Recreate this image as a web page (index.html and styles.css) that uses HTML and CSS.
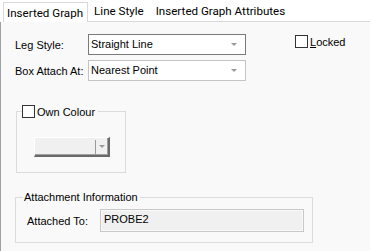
FILE: index.html
```html
<!DOCTYPE html>
<html>
<head>
<meta charset="utf-8">
<link rel="stylesheet" href="styles.css">
</head>
<body>
<div class="window">
  <div class="tabs">
    <div class="tab active">Inserted Graph</div>
    <div class="tab">Line Style</div>
    <div class="tab">Inserted Graph Attributes</div>
    <div class="tab-fill"></div>
  </div>
  <div class="panel">
    <div class="row row-first">
      <span class="label">Leg Style:</span>
      <div class="combo focused"><span class="combo-text">Straight Line</span><span class="arrow"></span></div>
      <label class="check locked"><span class="box"></span><span><u>L</u>ocked</span></label>
    </div>
    <div class="row">
      <span class="label">Box Attach At:</span>
      <div class="combo"><span class="combo-text">Nearest Point</span><span class="arrow"></span></div>
    </div>
    <div class="group colour-group">
      <div class="group-title"><span class="box"></span><span>Own Colour</span></div>
      <div class="colour-combo"><span class="cc-body"></span><span class="cc-sep"></span><span class="arrow small"></span></div>
    </div>
    <div class="group attach-group">
      <div class="group-title text-title">Attachment Information</div>
      <div class="attach-row">
        <span class="label attach-label">Attached To:</span>
        <div class="readonly">PROBE2</div>
      </div>
    </div>
  </div>
</div>
</body>
</html>
```

FILE: styles.css
```css
html, body {
  margin: 0;
  padding: 0;
  background: #ffffff;
}
.window {
  width: 370px;
  height: 251px;
  overflow: hidden;
  font-family: "Liberation Sans", Arial, sans-serif;
  font-size: 11px;
  color: #000;
  display: flex;
  flex-direction: column;
}
.tabs {
  display: flex;
  height: 22px;
  flex: none;
  align-items: flex-end;
  font-family: Roboto, "Noto Sans", sans-serif;
  font-size: 11.6px;
}
.tab {
  height: 21px;
  box-sizing: border-box;
  padding: 0 6px;
  line-height: 21px;
  border-bottom: 1px solid #d9d9d9;
  background: #fff;
  white-space: nowrap;
}
.tab.active {
  margin-left: 3px;
  height: 20px;
  border: 1px solid #d9d9d9;
  border-bottom: none;
  padding: 0 4px 0 3px;
  line-height: 20px;
}
.tab-fill {
  flex: 1;
  height: 1px;
  border-bottom: 1px solid #d9d9d9;
}
.panel {
  flex: 1;
  background: #f9f9f9;
  border-left: 1px solid #a0a0a0;
  padding: 12px 0 0 14px;
  display: flex;
  flex-direction: column;
  align-items: flex-start;
}
.row {
  display: flex;
  align-items: center;
  height: 21px;
}
.row + .row {
  margin-top: 5px;
}
.label {
  width: 73px;
  flex: none;
  white-space: nowrap;
}
.combo {
  width: 158px;
  height: 21px;
  box-sizing: border-box;
  border: 1px solid #c4c4c4;
  background: #fff;
  display: flex;
  align-items: center;
  padding: 0 0 0 2px;
}
.combo.focused {
  border-color: #7a7a7a;
}
.combo-text {
  flex: 1;
  line-height: 19px;
}
.arrow {
  width: 0;
  height: 0;
  border-left: 3px solid transparent;
  border-right: 3px solid transparent;
  border-top: 3px solid #9a9a9a;
  margin-right: 8px;
}
.check {
  display: flex;
  align-items: center;
  gap: 2px;
  margin-left: 49px;
  align-self: flex-start;
  margin-top: 1px;
}
.check u {
  text-decoration: underline;
}
.box {
  width: 13px;
  height: 13px;
  box-sizing: border-box;
  border: 1px solid #333;
  background: #fff;
  flex: none;
}
.group {
  border: 1px solid #dcdcdc;
  box-sizing: border-box;
}
.colour-group {
  margin-top: 30px;
  margin-left: 1px;
  width: 110px;
  height: 62px;
  display: flex;
  flex-direction: column;
}
.group-title {
  display: flex;
  align-items: center;
  gap: 2px;
  margin-top: -7px;
  margin-left: 5px;
  padding-right: 3px;
  align-self: flex-start;
  background: #f9f9f9;
  height: 13px;
}
.colour-combo {
  margin-top: 19px;
  margin-left: 17px;
  width: 76px;
  height: 20px;
  box-sizing: border-box;
  border-top: 1px solid #ffffff;
  border-left: 1px solid #ffffff;
  border-right: 2px solid #696969;
  border-bottom: 2px solid #696969;
  box-shadow: inset -1px -1px 0 #a0a0a0;
  background: #f0f0f0;
  display: flex;
  align-items: center;
}
.cc-body {
  flex: 1;
}
.cc-sep {
  width: 1px;
  height: 14px;
  background: #9a9a9a;
  margin-right: 3px;
}
.arrow.small {
  margin-right: 3px;
}
.attach-group {
  margin-top: 24px;
  width: 298px;
  height: 46px;
  display: flex;
  flex-direction: column;
}
.text-title {
  margin-left: 7px;
  padding: 0 2px 0 1px;
  height: 13px;
  line-height: 13px;
}
.attach-row {
  display: flex;
  align-items: center;
  margin-top: 5px;
  margin-left: 11px;
}
.attach-label {
  width: 73px;
}
.readonly {
  width: 204px;
  height: 23px;
  box-sizing: border-box;
  border: 1px solid #c8c8c8;
  box-shadow: inset 0 0 0 1px #f9f9f9;
  background: #f0f0f0;
  padding: 3px 0 0 3px;
  line-height: 13px;
}
```
